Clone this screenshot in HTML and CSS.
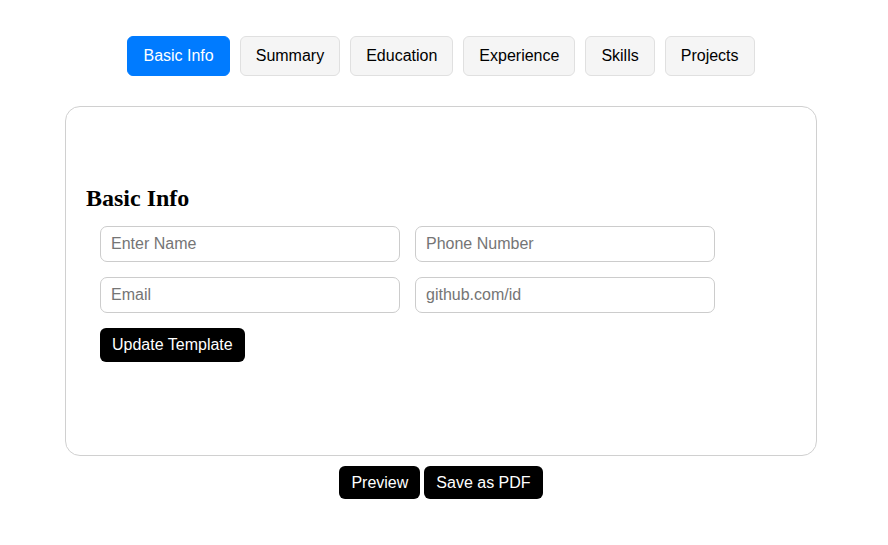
FILE: index.html
```html
<!DOCTYPE html>
<html>
<head>
<meta charset="utf-8">
<link rel="stylesheet" href="styles.css">
</head>
<body>
<nav class="tabs">
  <button class="tab active">Basic Info</button>
  <button class="tab">Summary</button>
  <button class="tab">Education</button>
  <button class="tab">Experience</button>
  <button class="tab">Skills</button>
  <button class="tab">Projects</button>
</nav>
<section class="card">
  <h2 class="title">Basic Info</h2>
  <div class="form">
    <div class="fields">
      <input class="field" type="text" placeholder="Enter Name">
      <input class="field" type="text" placeholder="Phone Number">
      <input class="field" type="text" placeholder="Email">
      <input class="field" type="text" placeholder="github.com/id">
    </div>
    <button class="btn dark">Update Template</button>
  </div>
</section>
<div class="actions">
  <button class="btn dark">Preview</button>
  <button class="btn dark">Save as PDF</button>
</div>
</body>
</html>
```
FILE: styles.css
```css
* { box-sizing: border-box; }
body {
  margin: 0;
  background: #fff;
  font-family: "Liberation Sans", Arial, sans-serif;
}
.tabs {
  display: flex;
  justify-content: center;
  gap: 10px;
  padding: 36px 6px 0 0;
}
.tab {
  height: 40px;
  padding: 0 15px;
  font-family: "Liberation Sans", Arial, sans-serif;
  font-size: 16px;
  color: #000;
  background: #f5f5f5;
  border: 1px solid #e0e0e0;
  border-radius: 6px;
}
.tab.active {
  background: #007bff;
  border-color: #007bff;
  color: #fff;
}
.card {
  width: 752px;
  height: 350px;
  margin: 30px 0 0 65px;
  padding: 77px 20px 20px;
  border: 1px solid #d0d0d0;
  border-radius: 15px;
}
.title {
  margin: 0 0 14px;
  font-family: "Liberation Serif", "Times New Roman", serif;
  font-size: 24px;
  font-weight: bold;
  line-height: 28px;
}
.form {
  padding-left: 14px;
}
.fields {
  display: grid;
  grid-template-columns: 300px 300px;
  gap: 15px;
}
.field {
  height: 36px;
  padding: 0 10px;
  font-family: "Liberation Sans", Arial, sans-serif;
  font-size: 16px;
  border: 1px solid #ccc;
  border-radius: 7px;
  outline: none;
}
.field::placeholder { color: #757575; }
.btn {
  font-family: "Liberation Sans", Arial, sans-serif;
  font-size: 16px;
  height: 34px;
  padding: 0 12px;
  border: none;
  border-radius: 6px;
}
.btn.dark {
  background: #000;
  color: #fff;
}
.form .btn {
  margin-top: 15px;
}
.actions {
  display: flex;
  justify-content: center;
  gap: 4px;
  margin-top: 10px;
  padding-right: 6px;
}
.actions .btn { height: 33px; }
```
